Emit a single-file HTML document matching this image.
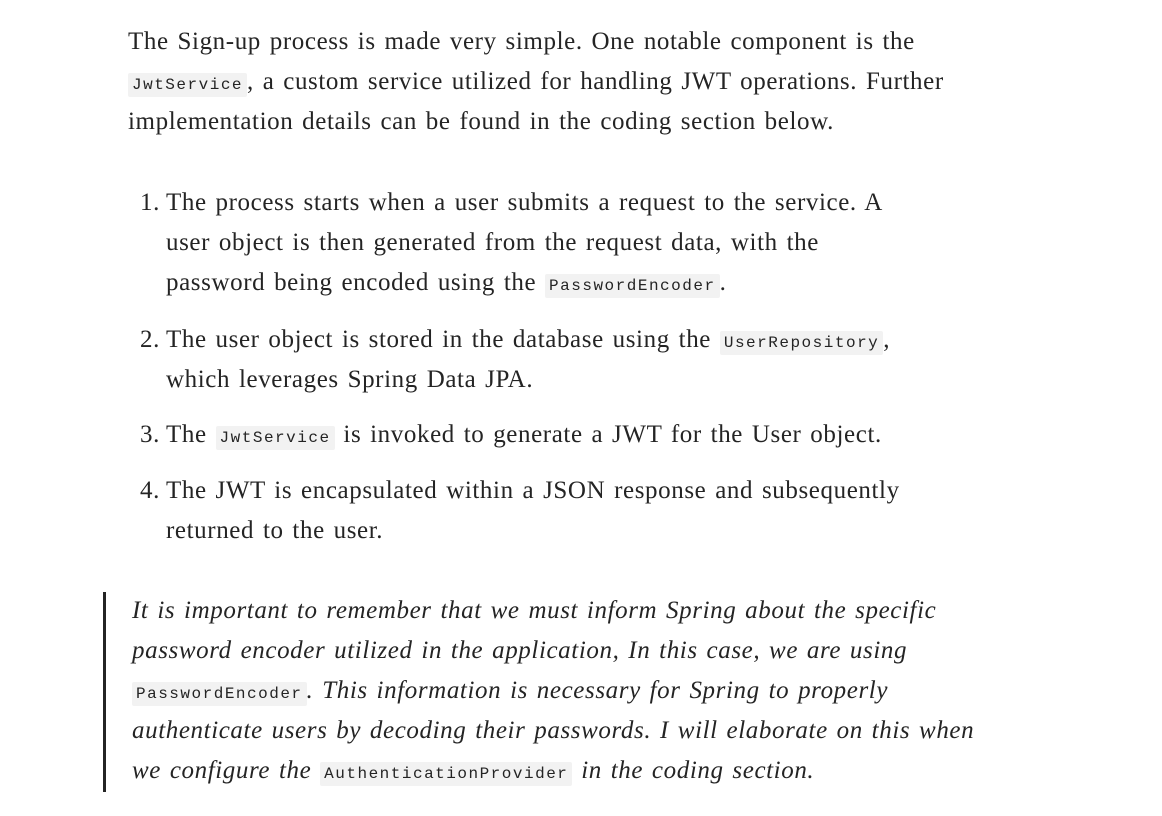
<!DOCTYPE html>
<html><head><meta charset="utf-8"><style>
html,body{margin:0;background:#fff;width:1162px;height:816px;overflow:hidden}
body{font-family:"Liberation Serif",serif;color:#242424;font-size:25px;line-height:40px;letter-spacing:0.6px;word-spacing:2px}
.p{position:absolute;left:128px;white-space:nowrap}
code{font-family:"Liberation Mono",monospace;font-size:16px;line-height:16px;letter-spacing:1.5px;word-spacing:0;background:#f2f2f2;padding:4px 4px;border-radius:2px;font-style:normal;display:inline-block;vertical-align:baseline}
.n{position:absolute;left:140px;white-space:nowrap}
.t{position:absolute;left:166px;white-space:nowrap}
.bar{position:absolute;left:103px;top:592px;width:3px;height:200px;background:#242424}
.q{position:absolute;left:132px;top:591px;font-style:italic;white-space:nowrap}
</style></head><body>
<div class="p" style="top:22px">The Sign-up process is made very simple. One notable component is the<br><code>JwtService</code>, a custom service utilized for handling JWT operations. Further<br>implementation details can be found in the coding section below.</div>
<div class="n" style="top:183px">1.</div>
<div class="t" style="top:183px">The process starts when a user submits a request to the service. A<br>user object is then generated from the request data, with the<br>password being encoded using the <code>PasswordEncoder</code>.</div>
<div class="n" style="top:320px">2.</div>
<div class="t" style="top:320px">The user object is stored in the database using the <code>UserRepository</code>,<br>which leverages Spring Data JPA.</div>
<div class="n" style="top:415px">3.</div>
<div class="t" style="top:415px">The <code>JwtService</code> is invoked to generate a JWT for the User object.</div>
<div class="n" style="top:471px">4.</div>
<div class="t" style="top:471px">The JWT is encapsulated within a JSON response and subsequently<br>returned to the user.</div>
<div class="bar"></div>
<div class="q">It is important to remember that we must inform Spring about the specific<br>password encoder utilized in the application, In this case, we are using<br><code>PasswordEncoder</code>. This information is necessary for Spring to properly<br>authenticate users by decoding their passwords. I will elaborate on this when<br>we configure the <code>AuthenticationProvider</code> in the coding section.</div>
</body></html>
